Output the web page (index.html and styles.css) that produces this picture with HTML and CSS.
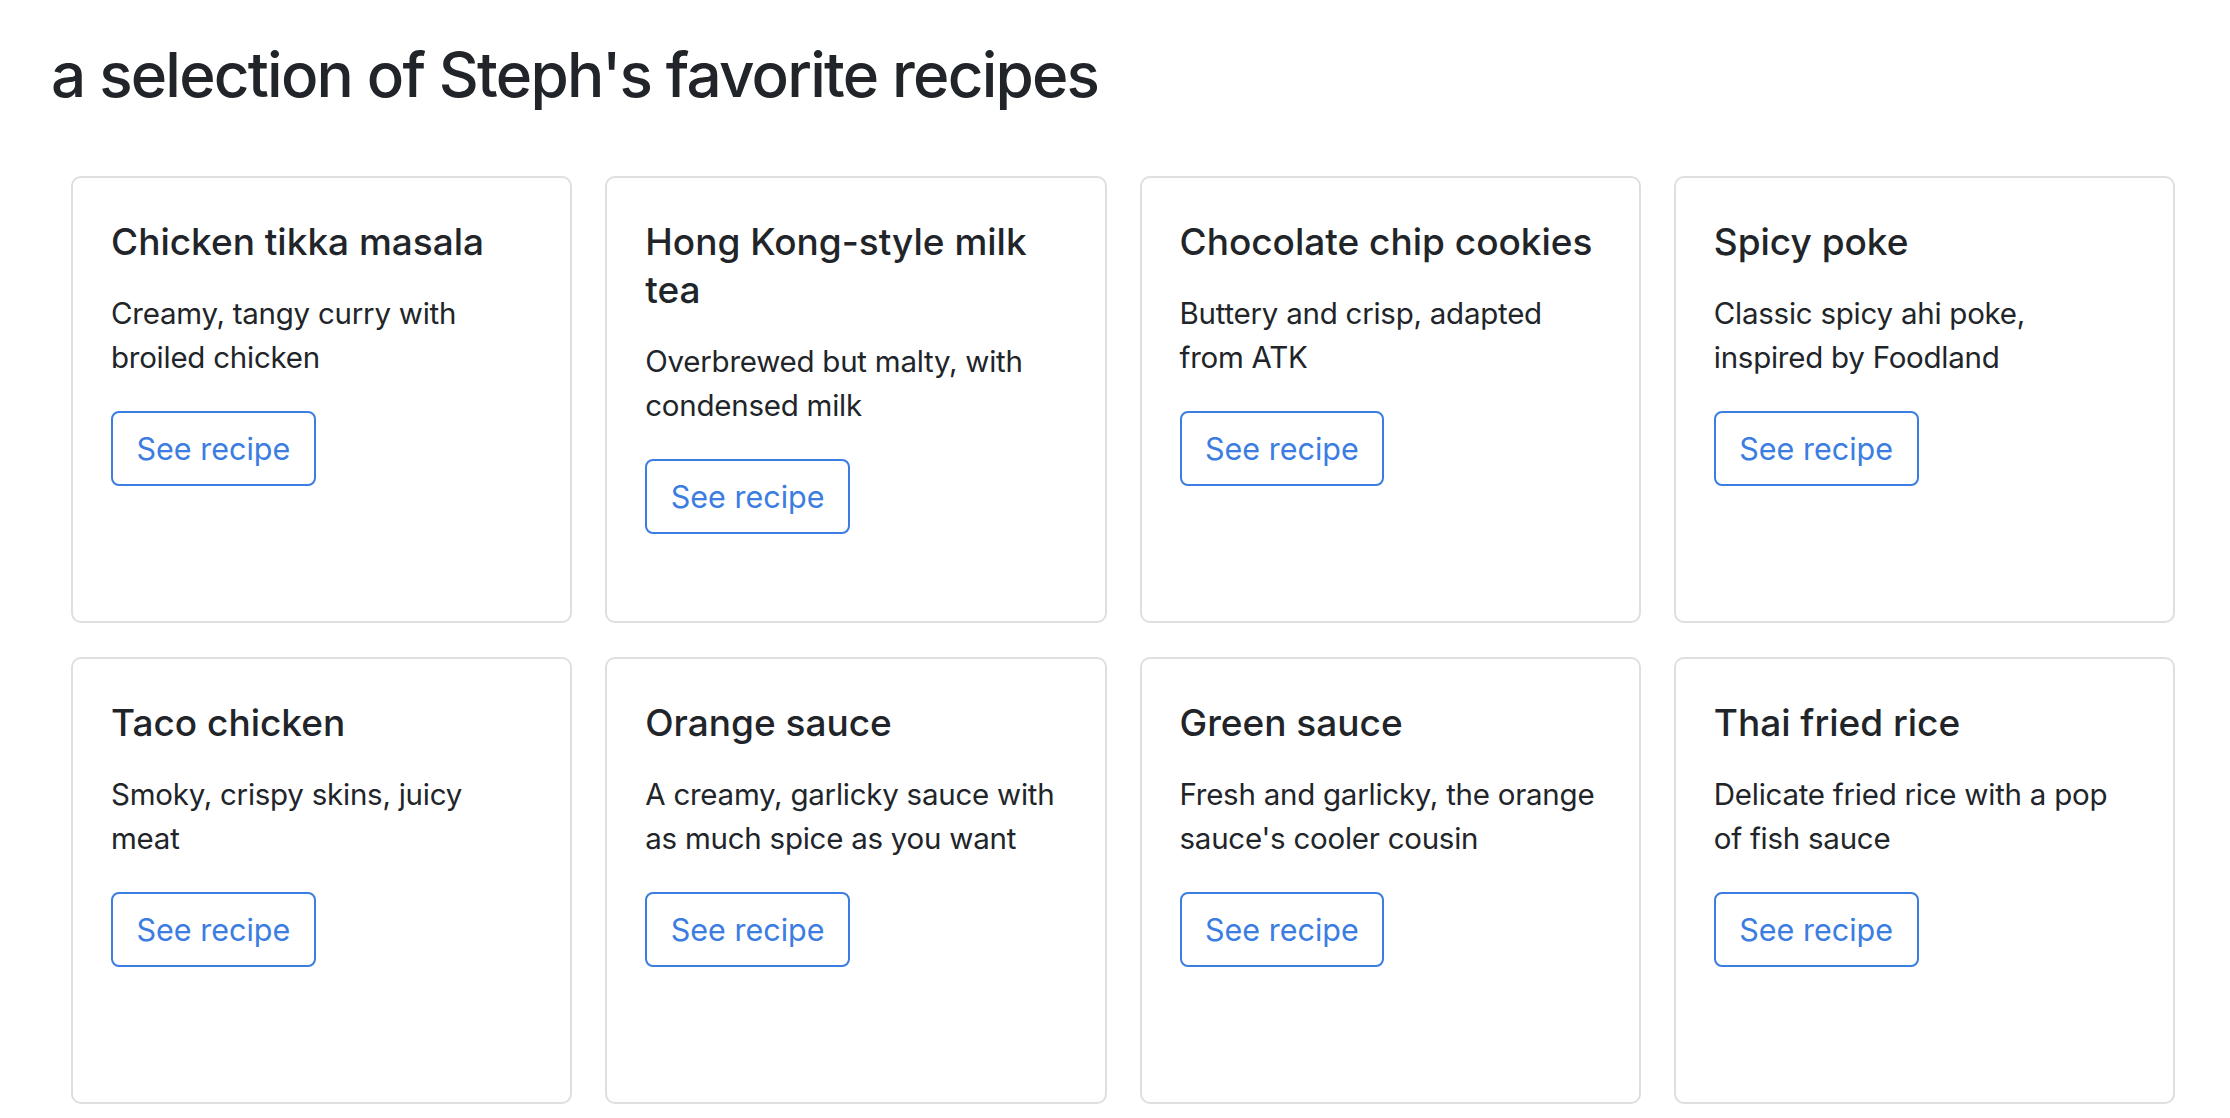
FILE: index.html
```html
<!DOCTYPE html>
<html lang="en">
<head>
<meta charset="utf-8">
<title>Steph's favorite recipes</title>
<link rel="stylesheet" href="styles.css">
</head>
<body>
<main class="page">
  <h1 class="page-title">a selection of Steph's favorite recipes</h1>
  <div class="grid">
    <div class="card">
      <h5 class="card-title">Chicken tikka masala</h5>
      <p class="card-text">Creamy, tangy curry with broiled chicken</p>
      <a class="btn" href="#">See recipe</a>
    </div>
    <div class="card">
      <h5 class="card-title">Hong Kong-style milk tea</h5>
      <p class="card-text">Overbrewed but malty, with condensed milk</p>
      <a class="btn" href="#">See recipe</a>
    </div>
    <div class="card">
      <h5 class="card-title">Chocolate chip cookies</h5>
      <p class="card-text">Buttery and crisp, adapted from ATK</p>
      <a class="btn" href="#">See recipe</a>
    </div>
    <div class="card">
      <h5 class="card-title">Spicy poke</h5>
      <p class="card-text">Classic spicy ahi poke, inspired by Foodland</p>
      <a class="btn" href="#">See recipe</a>
    </div>
    <div class="card">
      <h5 class="card-title">Taco chicken</h5>
      <p class="card-text">Smoky, crispy skins, juicy meat</p>
      <a class="btn" href="#">See recipe</a>
    </div>
    <div class="card">
      <h5 class="card-title">Orange sauce</h5>
      <p class="card-text">A creamy, garlicky sauce with as much spice as you want</p>
      <a class="btn" href="#">See recipe</a>
    </div>
    <div class="card">
      <h5 class="card-title">Green sauce</h5>
      <p class="card-text">Fresh and garlicky, the orange sauce's cooler cousin</p>
      <a class="btn" href="#">See recipe</a>
    </div>
    <div class="card">
      <h5 class="card-title">Thai fried rice</h5>
      <p class="card-text">Delicate fried rice with a pop of fish sauce</p>
      <a class="btn" href="#">See recipe</a>
    </div>
  </div>
</main>
</body>
</html>
```
FILE: styles.css
```css
* { box-sizing: border-box; }

html, body {
  margin: 0;
  padding: 0;
  background: #ffffff;
}

body {
  font-family: Inter, "Noto Sans", "Liberation Sans", sans-serif;
  color: #212529;
}

.page {
  padding: 38px 55px 0 51px;
}

.page-title {
  margin: 0;
  font-size: 62px;
  font-weight: 500;
  line-height: 74px;
  letter-spacing: -1.8px;
  color: #212529;
}

.grid {
  margin: 64px 0 0 20px;
  display: grid;
  grid-template-columns: repeat(4, 1fr);
  grid-auto-rows: 447px;
  column-gap: 33px;
  row-gap: 34px;
}

.card {
  border: 2px solid #dfdfdf;
  border-radius: 10px;
  padding: 40px 38px;
  display: flex;
  flex-direction: column;
  align-items: flex-start;
}

.card-title {
  margin: 0 0 25px 0;
  font-size: 37px;
  font-weight: 500;
  line-height: 48px;
  color: #212529;
}

.card-text {
  margin: 0 0 32px 0;
  font-size: 29.5px;
  font-weight: 400;
  line-height: 44px;
  letter-spacing: -0.25px;
  color: #212529;
}

.btn {
  display: inline-block;
  border: 2px solid #3b7de0;
  border-radius: 8px;
  color: #3b7de0;
  text-decoration: none;
  font-size: 30.5px;
  line-height: 44px;
  padding: 13.5px 23.5px;
}
```
